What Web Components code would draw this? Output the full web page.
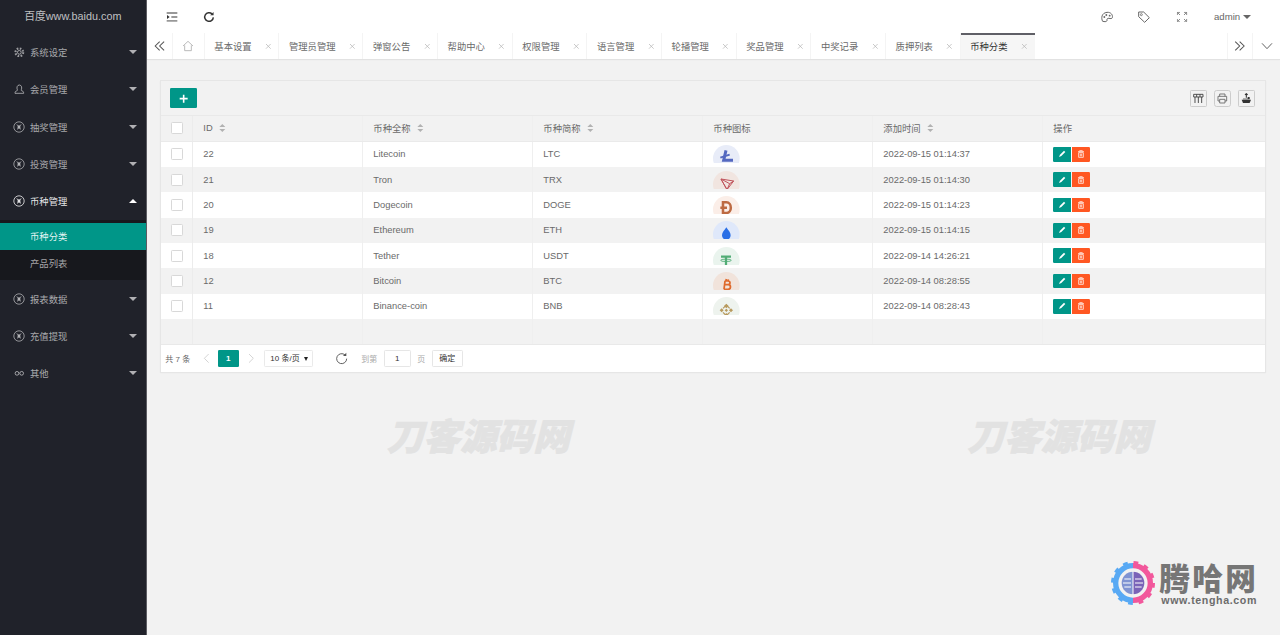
<!DOCTYPE html>
<html lang="zh"><head><meta charset="utf-8"><title>币种分类</title>
<style>html,body{margin:0;padding:0;overflow:hidden;background:#f2f2f2;font-family:"Liberation Sans","Noto Sans CJK SC",sans-serif}</style>
</head><body>
<x-app>
  <x-sidebar slot="side"></x-sidebar>
  <x-topbar slot="top"></x-topbar>
  <x-tabbar slot="tabs"></x-tabbar>
  <x-coin-table slot="body"></x-coin-table>
  <x-watermark slot="over"></x-watermark>
  <x-site-logo slot="over"></x-site-logo>
</x-app>
<script>
const svg=(w,h,vb,body,st='')=>`<svg width="${w}" height="${h}" viewBox="${vb}" style="${st};flex:none;display:block" fill="none" stroke="currentColor">${body}</svg>`;
const define=(name,css,html)=>customElements.define(name,class extends HTMLElement{
  connectedCallback(){ if(this.shadowRoot)return; const r=this.attachShadow({mode:'open'}); r.innerHTML=`<style>${css}</style>${typeof html==='function'?html(this):html}`; }
});
define('x-app',`
:host{display:block;zoom:.66667;width:1920px;height:952.5px;position:relative;overflow:hidden;font-family:"Liberation Sans","Noto Sans CJK SC",sans-serif;font-size:14px;color:#6a6a6a;background:#f2f2f2}
.root{display:flex;height:100%}
.main{flex:1;min-width:0;display:flex;flex-direction:column}
`,`<div class="root"><slot name="side"></slot><div class="main"><slot name="top"></slot><slot name="tabs"></slot><slot name="body"></slot></div></div><slot name="over"></slot>`);

const I={
 gear:svg(16,16,'0 0 16 16','<circle cx="8" cy="8" r="2.800" stroke-width="1.500"/><circle cx="8" cy="8" r="5.800" stroke-width="3.200" stroke-dasharray="2.400 2.150"/>'),
 user:svg(16,16,'0 0 16 16','<path d="M5 8.500C3.600 5.500 4.800 1.500 8 1.500s4.400 4 3 7c-.5 1 0 1.500 1.500 2 1.500.6 2 1.500 2 3.500H1.500c0-2 .5-2.900 2-3.500 1.500-.5 2-1 1.500-2z" stroke-width="1.500"/>'),
 ring:svg(18,18,'0 0 18 18','<circle cx="9" cy="9" r="7.800" stroke-width="1.400"/><circle cx="9" cy="9" r="2.400" fill="currentColor" stroke="none"/><path d="M5.500 5.500L9 8l3.500-2.500M6 12.500L9 10l3 2.500" stroke-width="1.500"/>'),
 inf:svg(16,16,'0 0 16 16','<circle cx="4.500" cy="8" r="2.800" stroke-width="1.500"/><circle cx="11.500" cy="8" r="2.800" stroke-width="1.500"/>')
};
const navRow=(icon,t,open)=>`<div class="row ${open?'open':''}"><span class="ic">${icon}</span><span class="t">${t}</span><i class="${open?'up':'down'}"></i></div>`;
define('x-sidebar',`
:host{display:block;flex:none;width:220px;height:100%;box-sizing:border-box;background:#20222a;border-right:1.500px solid #5c5c62;color:rgba(255,255,255,.62)}
.logo{height:50px;line-height:50px;text-align:center;font-size:16.200px;color:rgba(255,255,255,.72)}
.row{height:56px;display:flex;align-items:center;position:relative;padding-left:20px}
.ic{width:18px;display:flex;justify-content:center;color:rgba(255,255,255,.55)}
.t{position:absolute;left:45px;font-size:14px}
.row i{position:absolute;right:12.500px;width:0;height:0;border:7px solid transparent}
.row i.down{border-top-color:rgba(255,255,255,.65);border-bottom:0;top:25px}
.row i.up{border-bottom-color:#fff;border-top:0;top:25px}
.open{color:rgba(255,255,255,.9)}.open .ic{color:rgba(255,255,255,.8)}
.sub{background:#17181d;padding:5px 0}
.sub div{height:40px;line-height:43px;padding-left:45px}
.sub .on{background:#009688;color:rgba(255,255,255,.92)}
`,`<div class="logo">百度www.baidu.com</div>
${navRow(I.gear,'系统设定')}${navRow(I.user,'会员管理')}${navRow(I.ring,'抽奖管理')}${navRow(I.ring,'投资管理')}${navRow(I.ring,'币种管理',1)}
<div class="sub"><div class="on">币种分类</div><div>产品列表</div></div>
${navRow(I.ring,'报表数据')}${navRow(I.ring,'充值提现')}${navRow(I.inf,'其他')}`);

define('x-topbar',`
:host{display:flex;flex:none;height:50px;background:#fff;align-items:center;position:relative;color:#333}
.a{position:absolute;top:50%;transform:translate(-50%,-50%);display:block}
.u{position:absolute;left:1601px;top:18px;font-size:14.400px;color:#666;line-height:16px}
.c{position:absolute;left:1645px;top:22px;width:0;height:0;border:7px solid transparent;border-top-color:#666;border-bottom:0}
`,`<span class="a" style="left:38px">${svg(18,16,'0 0 18 16','<path d="M1 2h16M8 8h9M1 14h16" stroke-width="1.800"/><path d="M1.500 5v6L5.500 8z" fill="currentColor" stroke="none"/>')}</span>
<span class="a" style="left:93px">${svg(18,18,'0 0 18 18','<path d="M15.500 9.500a6.500 6.500 0 1 1-2-5.200" stroke-width="2.200"/><path d="M15.800 1.500v5h-5z" fill="currentColor" stroke="none"/>')}</span>
<span class="a" style="left:1440px;color:#666">${svg(20,18,'0 0 20 18','<path d="M3.500 15.500C1 11 1.500 3 10 2c6-.5 9 4 8 8-.5 1.800-3 1.500-5 1-2-.5-3.500 1-3 2.500.3 1.500-1 2.500-3 2.500z" stroke-width="1.500"/><circle cx="6" cy="9" r="1.400" fill="currentColor" stroke="none"/><circle cx="9" cy="6" r="1.400" fill="currentColor" stroke="none"/><circle cx="14" cy="7" r="1.400" fill="currentColor" stroke="none"/>')}</span>
<span class="a" style="left:1496px;color:#666">${svg(20,20,'0 0 20 20','<path d="M2 2.500h7.500l8.500 8.500-7 7-9-8.500z" stroke-width="1.500"/><circle cx="6" cy="6.500" r="1.500" stroke-width="1.200"/>')}</span>
<span class="a" style="left:1553px;color:#777">${svg(16,16,'0 0 16 16','<path d="M1 5V1h4M11 1h4v4M15 11v4h-4M5 15H1v-4M1 1l4 4M15 1l-4 4M15 15l-4-4M1 15l4-4" stroke-width="1.300"/>')}</span>
<span class="u">admin</span><span class="c"></span>`);

const tabs=[['基本设置'],['管理员管理'],['弹窗公告'],['帮助中心'],['权限管理'],['语言管理'],['轮播管理'],['奖品管理'],['中奖记录'],['质押列表'],['币种分类']];
const x=svg(10,10,'0 0 10 10','<path d="M1.500 1.500l7 7M8.500 1.500l-7 7" stroke-width="1.100"/>','color:#b5b5b5;margin-left:20px');
const dbl=d=>svg(20,18,'0 0 18 16',`<path d="${d}" stroke-width="1.400"/>`);
define('x-tabbar',`
:host{display:flex;flex:none;height:40px;background:#fff;box-sizing:border-box;border-bottom:1px solid #e2e2e2;box-shadow:0 1px 2px rgba(0,0,0,.06);position:relative;font-size:14px;color:#6a6a6a}
.b{flex:none;width:40px;display:flex;align-items:center;justify-content:center;border-right:1px solid #f4f4f4;box-sizing:border-box;color:#555}
.t{flex:none;display:flex;align-items:center;box-sizing:border-box;padding-left:14.500px;border-right:1px solid #f4f4f4;white-space:nowrap}
.on{background:#f6f6f6;color:#333;box-shadow:inset 0 3px 0 #5f5f66;border-right:0}
.sp{flex:1}
`,`<div class="b" style="padding-left:2px">${dbl('M9 2L3 8l6 6M15 2L9 8l6 6')}</div>
<div class="b" style="width:47px;color:#aaa">${svg(18,18,'0 0 18 18','<path d="M1.500 9L9 2l7.500 7M4 8v8h10V8" stroke-width="1.200"/>')}</div>
${tabs.map(([t])=>`<div class="t ${t==='币种分类'?'on':''}" style="width:${t.length*14+56}px">${t}${x}</div>`).join('')}
<div class="sp"></div>
<div class="b" style="border-left:1px solid #f4f4f4">${dbl('M3 2l6 6-6 6M9 2l6 6-6 6')}</div>
<div class="b" style="border-right:0">${svg(18,12,'0 0 18 12','<path d="M1.500 2L9 10l7.500-8" stroke-width="1.400"/>')}</div>`);

const C={
 ltc:['#e8ecf8','<path d="M19.500 8L16 23h14" stroke="#5468c0" stroke-width="4.500"/><path d="M11 19l14-4.500" stroke="#5468c0" stroke-width="3"/>'],
 trx:['#f1e5e0','<path d="M12 12l19 3-10 13zM12 12l9 16M12 12l13 7 6-4M25 19l-4 9" stroke="#c0545c" stroke-width="1.500"/>'],
 doge:['#fbeee8','<path d="M15 9.500h5c9 0 9 16 0 16h-5zM11 17.500h10" stroke="#bd6a42" stroke-width="3.800"/>'],
 eth:['#dfe8fa','<path d="M20 9.500c3 4.500 6.500 8 6.500 12a6.500 6.500 0 0 1-13 0c0-4 3.500-7.500 6.500-12z" fill="#2a6fe6"/>'],
 usdt:['#eaf4ee','<path d="M12 14.500h15M19.500 14.500V27" stroke="#52ad76" stroke-width="3.400"/><ellipse cx="19.500" cy="20" rx="8" ry="1.800" stroke="#52ad76" stroke-width="1.300" fill="none"/>'],
 btc:['#f1e3db','<path d="M17.500 13.500h5c4 0 4 5.500 0 5.500h-5m5 0c5 0 5 7 0 7h-6M18 13.500L16.500 26M20 10.500l-.5 3M23 11l-.5 2.500" stroke="#df6a2c" stroke-width="2.600"/>'],
 bnb:['#eef3ee','<g fill="#b89a5e"><path d="M20 10l3.500 3.500-3.500 3.500-3.500-3.500zM13 17l3 3-3 3-3-3zM27 17l3 3-3 3-3-3zM20 17.500l2.500 2.500-2.500 2.500-2.500-2.500zM20 24l3.500 3.500h-7z"/></g><path d="M15 17l5-5 5 5M15 23l5 5 5-5" stroke="#b89a5e" stroke-width="1.800"/>']
};
const coin=k=>`<svg width="40" height="27" viewBox="0 0 40 27" style="display:block" fill="none"><circle cx="20" cy="20" r="20" fill="${C[k][0]}"/>${C[k][1]}</svg>`;
const rows=[[22,'Litecoin','LTC','ltc','2022-09-15 01:14:37'],[21,'Tron','TRX','trx','2022-09-15 01:14:30'],[20,'Dogecoin','DOGE','doge','2022-09-15 01:14:23'],[19,'Ethereum','ETH','eth','2022-09-15 01:14:15'],[18,'Tether','USDT','usdt','2022-09-14 14:26:21'],[12,'Bitcoin','BTC','btc','2022-09-14 08:28:55'],[11,'Binance-coin','BNB','bnb','2022-09-14 08:28:43']];
const sort=svg(10,12,'0 0 10 12','<path d="M5 0l4.500 4.500h-9zM5 12L.5 7.500h9z" fill="#b2b2b2" stroke="none"/>','margin-left:10px');
const cb='<span class="cb"></span>';
const ops=`<span class="op"><b class="e">${svg(12,12,'0 0 12 12','<path d="M1.500 10.500L3 7l6-6 2 2-6 6z" fill="#fff" stroke="none"/>')}</b><b class="d">${svg(12,12,'0 0 12 12','<path d="M1.500 2.500h9M4 2V1h4v1M2.500 4h7v7h-7zM5 5.500v4M7 5.500v4" stroke="#fff" stroke-width="1.100"/>')}</b></span>`;
define('x-coin-table',`
:host{display:block;margin:30px 0 0 19.500px;background:#fff;border:1px solid #e6e6e6;box-sizing:border-box;width:1660px;box-shadow:0 1px 2px rgba(0,0,0,.05)}
.tool{height:52px;box-sizing:border-box;background:#f2f2f2;display:flex;align-items:flex-start;padding:11px 15px 0 14px;border-bottom:1px solid #e9e9e9}
.add{width:40px;height:30px;background:#009688;border-radius:2px;display:flex;align-items:center;justify-content:center;color:#fff}
.sp{flex:1}
.tb{width:26px;height:26px;box-sizing:border-box;border:1px solid #ccc;border-radius:2px;margin-left:10px;margin-top:2px;display:flex;align-items:center;justify-content:center;color:#444}
.r{display:grid;grid-template-columns:49px repeat(5,255px) 1fr;height:38px;box-sizing:border-box}
.r>div{display:flex;align-items:center;padding-left:15px;border-right:1px solid #efefef;box-sizing:border-box;white-space:nowrap;min-width:0}
.r>div:first-child{padding-left:16px;border-right:2px solid #ececec}
.r>div:last-child{border-right:0}
.h{height:39px;background:#f2f2f2;border-bottom:1px solid #eaeaea}
.even{background:#f2f2f2}
.blank{height:39px;background:#f2f2f2;border-bottom:1px solid #e9e9e9}
.cb{width:18px;height:18px;box-sizing:border-box;background:#fff;border:1px solid #d8d8d8;border-radius:2px;display:block}
.op{display:flex;border-radius:2px;overflow:hidden}
.op b{width:27px;height:22px;display:flex;align-items:center;justify-content:center}
.e{background:#009688}.d{background:#ff5722;margin-left:.5px}
.page{height:40px;display:flex;align-items:center;position:relative;font-size:12px;color:#666}
.page>*{position:absolute}
.cur{left:86px;top:7px;width:31px;height:26px;background:#009688;color:#fff;border-radius:2px;text-align:center;line-height:26px;font-weight:bold}
.sel{left:155px;top:7px;width:74px;height:26px;box-sizing:border-box;border:1px solid #eaeaea;border-radius:2px;line-height:24px;padding-left:8px;color:#333;background:#fff}
.sel i{position:absolute;right:6px;top:10px;width:0;height:0;border-left:4px solid transparent;border-right:4px solid transparent;border-top:6px solid #222}
.inp{left:335px;top:7px;width:40px;height:26px;box-sizing:border-box;border:1px solid #e6e6e6;border-radius:2px;text-align:center;line-height:24px;color:#333}
.ok{left:407px;top:7px;width:46px;height:26px;box-sizing:border-box;border:1px solid #e6e6e6;border-radius:2px;text-align:center;line-height:24px;color:#333}
`,`<div class="tool"><div class="add">${svg(14,14,'0 0 14 14','<path d="M7 1v12M1 7h12" stroke-width="2.400"/>')}</div><span class="sp"></span>
<div class="tb">${svg(16,16,'0 0 16 16','<path d="M1 2h14v4H1zM3 6v9M8 6v9M13 6v9M5.500 2v4M10.500 2v4" stroke-width="1.400"/>')}</div>
<div class="tb" style="border-radius:4px;color:#666">${svg(16,16,'0 0 16 16','<path d="M4 5V1.500h8V5M4 12H1.500V5h13v7H12M4 9.500h8V15H4z" stroke-width="1.300"/>')}</div>
<div class="tb" style="color:#333">${svg(16,16,'0 0 16 16','<path d="M1 10l2 5h10l2-5z" fill="currentColor" stroke="none"/><path d="M8 1v6M6 3l2-2 2 2" stroke-width="1.600"/><path d="M3 9h10" stroke-width="1"/><path d="M10 6h3v3h-3z" fill="currentColor" stroke="none"/>')}</div></div>
<div class="r h"><div>${cb}</div><div>ID${sort}</div><div>币种全称${sort}</div><div>币种简称${sort}</div><div>币种图标</div><div>添加时间${sort}</div><div>操作</div></div>
${rows.map((r,i)=>`<div class="r ${i%2?'even':''}"><div>${cb}</div><div>${r[0]}</div><div>${r[1]}</div><div>${r[2]}</div><div>${coin(r[3])}</div><div>${r[4]}</div><div>${ops}</div></div>`).join('')}
<div class="r blank"><div></div><div></div><div></div><div></div><div></div><div></div><div></div></div>
<div class="page">
<span style="left:7px">共 7 条</span>
<span style="left:63px;color:#c4c4c4">${svg(10,16,'0 0 10 16','<path d="M8.500 1.500L2 8l6.500 6.500" stroke-width="1.100"/>')}</span>
<span class="cur">1</span>
<span style="left:131px;color:#c4c4c4">${svg(10,16,'0 0 10 16','<path d="M1.500 1.500L8 8l-6.500 6.500" stroke-width="1.100"/>')}</span>
<span class="sel">10 条/页<i></i></span>
<span style="left:261px;color:#555">${svg(20,20,'0 0 20 20','<path d="M17.500 10a7.500 7.500 0 1 1-2.500-5.600" stroke-width="1.400"/><path d="M17 1v5h-5z" fill="currentColor" stroke="none"/>')}</span>
<span style="left:301px;color:#aaa">到第</span><span class="inp">1</span><span style="left:385px;color:#aaa">页</span><span class="ok">确定</span>
</div>`);

define('x-watermark',`
:host{display:block;position:absolute;left:0;top:0;width:0;height:0;pointer-events:none}
span{position:absolute;top:618px;font:italic 900 55px/68px "Noto Sans CJK SC",sans-serif;color:#e2e2e2;-webkit-text-stroke:1px #e2e2e2;white-space:nowrap}
`,`<span style="left:580px">刀客源码网</span><span style="left:1451px">刀客源码网</span>`);

define('x-site-logo',`
:host{display:block;position:absolute;left:1664px;top:838px;width:230px;height:80px}
svg{position:absolute;left:3px;top:3px}
.n{position:absolute;left:75px;top:5px;font:900 46px/46px "Noto Sans CJK SC",sans-serif;color:#767676;letter-spacing:3.500px;white-space:nowrap}
.w{position:absolute;left:78px;top:53px;font:700 16px/18px "Liberation Sans",sans-serif;color:#6c6c6c;letter-spacing:.9px;white-space:nowrap}
`,`<svg width="66" height="66" viewBox="0 0 66 66" fill="none">
<defs><clipPath id="l"><rect width="33" height="66"/></clipPath><clipPath id="rr"><rect x="33" width="33" height="66"/></clipPath></defs>
<g clip-path="url(#l)"><circle cx="33" cy="33" r="26" stroke="#58a9f4" stroke-width="8"/><circle cx="33" cy="33" r="30" stroke="#58a9f4" stroke-width="6" stroke-dasharray="7 8.700"/><circle cx="33" cy="33" r="17" fill="#7f93d2"/></g>
<g clip-path="url(#rr)"><circle cx="33" cy="33" r="26" stroke="#f2589c" stroke-width="8"/><circle cx="33" cy="33" r="30" stroke="#f2589c" stroke-width="6" stroke-dasharray="7 8.700"/><circle cx="33" cy="33" r="17" fill="#7a63b8"/></g>
<path d="M20 27h10M18 33h12M20 39h10M36 27h10M36 33h12M36 39h10M33 15v36" stroke="#fff" stroke-width="1.500"/>
</svg><span class="n">腾哈网</span><span class="w">www.tengha.com</span>`);
</script>
</body></html>
